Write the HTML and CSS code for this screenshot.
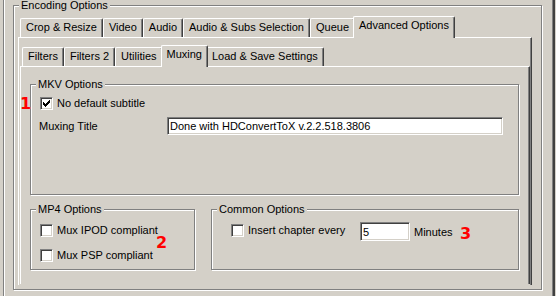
FILE: index.html
```html
<!DOCTYPE html>
<html>
<head>
<meta charset="utf-8">
<link rel="stylesheet" href="styles.css">
</head>
<body>
<div class="frame">
  <div class="group enc">
    <span class="gtitle">Encoding Options</span>
    <div class="tabctl outer">
      <div class="tabrow">
        <div class="tab">Crop &amp; Resize</div>
        <div class="tab">Video</div>
        <div class="tab">Audio</div>
        <div class="tab">Audio &amp; Subs Selection</div>
        <div class="tab">Queue</div>
        <div class="tab sel">Advanced Options</div>
      </div>
      <div class="panel outer-panel">
        <div class="tabctl inner">
          <div class="tabrow">
            <div class="tab">Filters</div>
            <div class="tab">Filters 2</div>
            <div class="tab">Utilities</div>
            <div class="tab sel">Muxing</div>
            <div class="tab">Load &amp; Save Settings</div>
          </div>
          <div class="panel inner-panel">
            <div class="group mkv">
              <span class="gtitle">MKV Options</span>
              <label class="cb mkv-cb">
                <span class="box"><svg width="7" height="7" viewBox="0 0 7 7"><path d="M6 0h1v1h-1z M5 1h2v1h-2z M0 2h1v1h-1z M4 2h3v1h-3z M0 3h2v1h-2z M3 3h3v1h-3z M0 4h5v1h-5z M1 5h3v1h-3z M2 6h1v1h-1z" fill="#000" shape-rendering="crispEdges"/></svg></span>
                <span class="cbtext">No default subtitle</span>
              </label>
              <div class="title-row">
                <span class="title-label">Muxing Title</span>
                <input class="edit title-edit" type="text" value="Done with HDConvertToX v.2.2.518.3806">
              </div>
            </div>
            <div class="row2">
              <div class="group mp4">
                <span class="gtitle">MP4 Options</span>
                <label class="cb mp4-cb1"><span class="box"></span><span class="cbtext">Mux IPOD compliant</span></label>
                <label class="cb mp4-cb2"><span class="box"></span><span class="cbtext">Mux PSP compliant</span></label>
              </div>
              <div class="group common">
                <span class="gtitle">Common Options</span>
                <div class="chap">
                  <label class="cb chap-cb"><span class="box"></span><span class="cbtext">Insert chapter every</span></label>
                  <input class="edit num" type="text" value="5">
                  <span class="minutes">Minutes</span>
                </div>
              </div>
            </div>
            <span class="mark m1">1</span>
            <span class="mark m2">2</span>
            <span class="mark m3">3</span>
          </div>
        </div>
      </div>
    </div>
  </div>
</div>
</body>
</html>
```

FILE: styles.css
```css
* { box-sizing: border-box; }
html, body { margin: 0; padding: 0; }
body {
  width: 556px;
  height: 296px;
  overflow: hidden;
  background: #d4d0c8;
  font: 11px/13px "Liberation Sans", Arial, sans-serif;
  color: #000;
}
.frame {
  margin-left: 3px;
  width: 552px;
  height: 296px;
  border-left: 1px solid #808080;
  border-right: 2px solid #404040;
  box-shadow: inset 1px 0 #fff, inset -1px 0 #808080;
  padding: 5px 0 0 9px;
}
.group {
  position: relative;
  border: 1px solid #808080;
  box-shadow: inset 1px 1px #fff, 1px 1px #fff;
}
.gtitle {
  position: absolute;
  top: -7px;
  left: 5px;
  padding: 0 2px;
  background: #d4d0c8;
  white-space: nowrap;
}
.enc {
  width: 529px;
  height: 285px;
  padding: 10px 0 0 4px;
}
.tabctl.outer { width: 514px; }
.tabrow {
  display: flex;
  align-items: flex-end;
  height: 21px;
  padding-left: 2px;
}
.tab {
  height: 19px;
  padding: 2px 5px 0;
  border: 1px solid #fff;
  border-right-color: #404040;
  border-bottom: 0;
  border-radius: 2px 2px 0 0;
  box-shadow: inset -1px 0 #808080;
  white-space: nowrap;
  background: #d4d0c8;
}
.tab.sel {
  height: 22px;
  margin: 0 -2px -1px;
  position: relative;
  z-index: 1;
}
.panel {
  border-top: 1px solid #fff;
  border-left: 1px solid #fff;
  border-right: 1px solid #404040;
  box-shadow: inset -1px 0 #808080;
}
.outer-panel {
  height: 248px;
  padding: 7px 1px 0 1px;
}
.inner-panel {
  height: 218px;
  position: relative;
  padding: 17px 0 0 9px;
}
.mkv { width: 489px; height: 111px; }
.row2 { display: flex; gap: 16px; margin-top: 14px; }
.mp4 { width: 165px; height: 61px; }
.common { width: 308px; height: 61px; }

.cb {
  display: flex;
  align-items: center;
  gap: 4px;
  white-space: nowrap;
}
.box {
  width: 13px;
  height: 13px;
  flex: none;
  background: #fff;
  border: 1px solid;
  border-color: #808080 #fff #fff #808080;
  box-shadow: inset 1px 1px #404040, inset -1px -1px #d4d0c8;
}
.box svg { display: block; margin: 2px 0 0 2px; }
.mkv-cb { margin: 12px 0 0 9px; }
.title-row {
  display: flex;
  align-items: center;
  margin: 7px 0 0 8px;
}
.title-label { width: 128px; }
.edit {
  appearance: none;
  margin: 0;
  outline: none;
  height: 18px;
  border: 1px solid;
  border-color: #808080 #fff #fff #808080;
  box-shadow: inset 1px 1px #404040, inset -1px -1px #d4d0c8;
  background: #fff;
  padding: 0 2px;
  font: 11px/13px "Liberation Sans", Arial, sans-serif;
  color: #000;
}
.title-edit { width: 336px; }
.mp4-cb1 { margin: 14px 0 0 9px; }
.mp4-cb2 { margin: 12px 0 0 9px; }
.chap {
  display: flex;
  align-items: flex-start;
  margin: 12px 0 0 19px;
}
.chap-cb { width: 129px; margin-top: 2px; }
.num { width: 50px; height: 19px; }
.minutes { margin: 4px 0 0 4px; }
.mark {
  position: absolute;
  color: #f00;
  font: bold 16px/16px "DejaVu Sans", sans-serif;
}
.m1 { left: -1px; top: 29px; }
.m2 { left: 135px; top: 168px; }
.m3 { left: 439px; top: 159px; }
```
